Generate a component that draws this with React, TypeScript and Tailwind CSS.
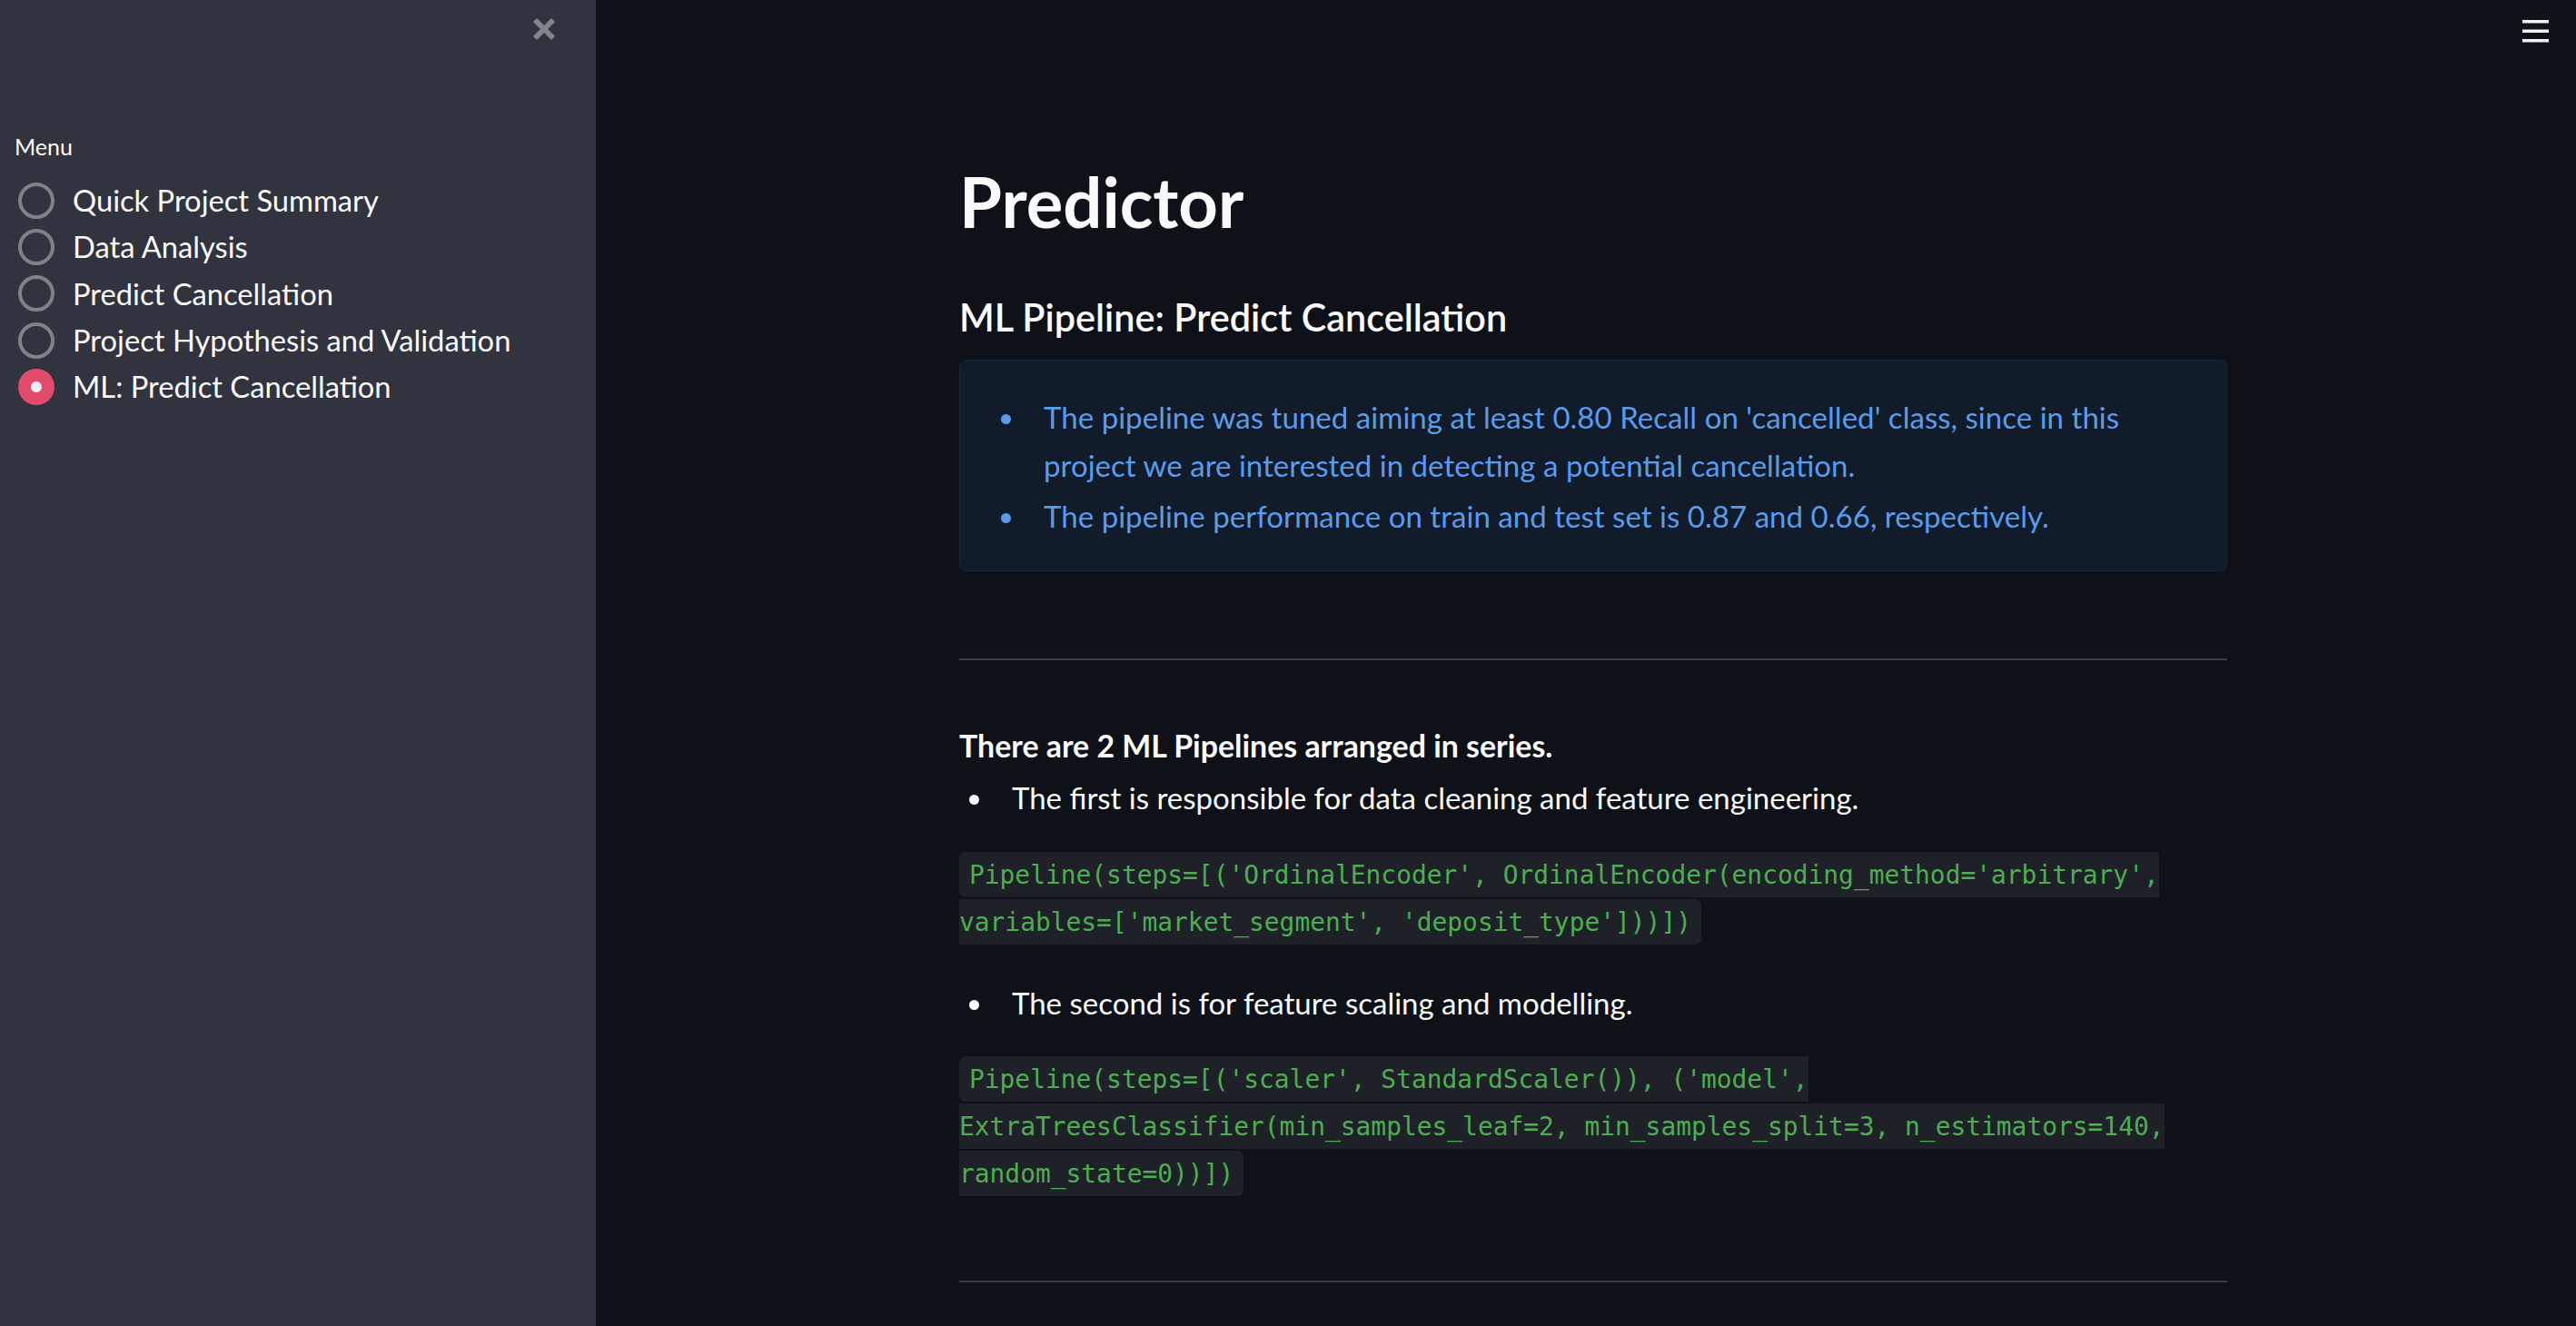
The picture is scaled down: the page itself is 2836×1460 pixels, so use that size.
import React from 'react'

const MENU = [
  'Quick Project Summary',
  'Data Analysis',
  'Predict Cancellation',
  'Project Hypothesis and Validation',
  'ML: Predict Cancellation',
]

const Bullet = ({ color, children }: { color: string; children: React.ReactNode }) => (
  <li className="flex">
    <span className="flex h-[53px] w-[58px] shrink-0 items-center pl-[11px] pt-[4px]">
      <span className={`block h-[11px] w-[11px] rounded-full ${color}`} />
    </span>
    <span>{children}</span>
  </li>
)

const Code = ({ children }: { children: string }) => (
  <p className="font-['DejaVu_Sans_Mono',monospace] text-[27.9px] leading-[52px]">
    <code className="rounded-[7px] bg-[#1f2129] px-[11px] py-[8.5px] font-['DejaVu_Sans_Mono',monospace] text-[#4cae4f]">
      {children}
    </code>
  </p>
)

export default function App() {
  const selected = 4

  return (
    <div className="flex h-[1460px] w-full overflow-hidden font-['Lato',sans-serif] text-[#fafafa]">
      {/* sidebar */}
      <aside className="relative w-[656px] shrink-0 bg-[#31333f]">
        <button className="absolute left-[585px] top-[18px] h-[28px] w-[28px]">
          <svg viewBox="0 0 28 28" className="h-[28px] w-[28px]">
            <path d="M4 4 L24 24 M24 4 L4 24" stroke="#83848b" strokeWidth="6" />
          </svg>
        </button>

        <div className="pl-[16px] pt-[146px] text-[25px] leading-[30px]">Menu</div>

        <div className="mt-[19px]">
          {MENU.map((item, i) => (
            <div key={item} className="flex h-[51.3px] items-center">
              <span className="ml-[20px] flex h-[40px] w-[40px] items-center justify-center">
                {i === selected ? (
                  <span className="flex h-[40px] w-[40px] items-center justify-center rounded-full bg-[#e34b6c]">
                    <span className="h-[12px] w-[12px] rounded-full bg-[#eef0f4]" />
                  </span>
                ) : (
                  <span className="h-[40px] w-[40px] rounded-full border-[4px] border-[#7f8188]" />
                )}
              </span>
              <span className="ml-[20px] text-[32.7px]">{item}</span>
            </div>
          ))}
        </div>
      </aside>

      {/* main */}
      <main className="relative flex-1 bg-[#0e1117]">
        <button className="absolute right-[30px] top-[22px]">
          <svg viewBox="0 0 29 25" className="h-[25px] w-[29px]" fill="#f2f2f2">
            <rect x="0" y="0" width="29" height="3.5" />
            <rect x="0" y="10.5" width="29" height="3.5" />
            <rect x="0" y="21" width="29" height="3.5" />
          </svg>
        </button>

        <div className="ml-[400px] w-[1396px] pt-[174px] text-[33px] leading-[53px]">
          <h1 className="text-[76px] font-bold leading-[96px]">Predictor</h1>

          <h3 className="mt-[49px] text-[41.4px] font-semibold leading-[60px]">
            ML Pipeline: Predict Cancellation
          </h3>

          <div className="mt-[17px] rounded-[8px] border border-[#16263a] bg-[#111b2a] pb-[33px] pl-[34px] pr-[36px] pt-[36px] text-[33.1px] text-[#5a9ceb]">
            <ul className="space-y-[3px]">
              <Bullet color="bg-[#5a9ceb]">
                The pipeline was tuned aiming at least 0.80 Recall on 'cancelled' class, since in this
                project we are interested in detecting a potential cancellation.
              </Bullet>
              <Bullet color="bg-[#5a9ceb]">
                The pipeline performance on train and test set is 0.87 and 0.66, respectively.
              </Bullet>
            </ul>
          </div>

          <hr className="mt-[96px] h-[2px] border-0 bg-[#3b3c42]" />

          <p className="mt-[68px] text-[33.9px] font-bold">There are 2 ML Pipelines arranged in series.</p>
          <ul className="mt-[4px]">
            <Bullet color="bg-[#fafafa]">The first is responsible for data cleaning and feature engineering.</Bullet>
          </ul>
          <div className="mt-[32px]">
            <Code>
              {
                "Pipeline(steps=[('OrdinalEncoder', OrdinalEncoder(encoding_method='arbitrary', variables=['market_segment', 'deposit_type']))])"
              }
            </Code>
          </div>

          <ul className="mt-[37px]">
            <Bullet color="bg-[#fafafa]">The second is for feature scaling and modelling.</Bullet>
          </ul>
          <div className="mt-[31px]">
            <Code>
              {
                "Pipeline(steps=[('scaler', StandardScaler()), ('model', ExtraTreesClassifier(min_samples_leaf=2, min_samples_split=3, n_estimators=140, random_state=0))])"
              }
            </Code>
          </div>

          <hr className="mt-[92px] h-[2px] border-0 bg-[#3b3c42]" />
        </div>
      </main>
    </div>
  )
}
